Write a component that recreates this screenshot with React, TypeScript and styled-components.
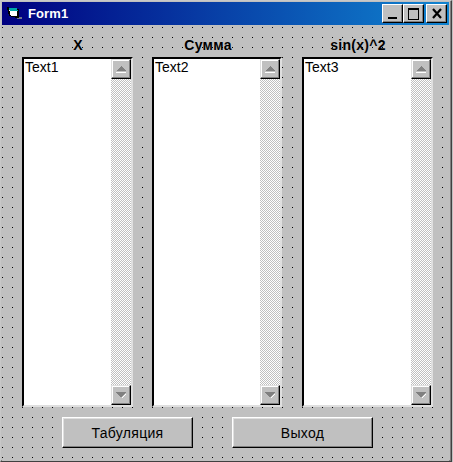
import React from "react";
import styled, { createGlobalStyle } from "styled-components";

const Global = createGlobalStyle`
  html, body { margin: 0; padding: 0; background: #c0c0c0; }
  #root { width: 453px; height: 462px; }
`;

const Win = styled.div`
  box-sizing: border-box;
  width: 452px;
  height: 462px;
  padding: 1px 2px 0 1px;
  display: flex;
  flex-direction: column;
  background: #c0c0c0;
  border-style: solid;
  border-width: 1px;
  border-color: #c8c8c8 #404040 #404040 #c8c8c8;
  box-shadow: inset -1px -1px 0 #808080;
  font-family: "Liberation Sans", Arial, sans-serif;
`;

const TitleBar = styled.div`
  flex: none;
  height: 23px;
  padding: 0 2px 0 5px;
  display: flex;
  align-items: center;
  background: linear-gradient(to right, #000080, #1084d0);
`;

const Caption = styled.span`
  margin-left: 5px;
  flex: 1;
  color: #fff;
  font-size: 13px;
  font-weight: 700;
  letter-spacing: 0.1px;
`;

const CtlButton = styled.div<{ $gap?: number }>`
  box-sizing: border-box;
  width: 21px;
  height: 19px;
  margin-left: ${(p) => p.$gap ?? 0}px;
  display: flex;
  align-items: center;
  justify-content: center;
  background: #c0c0c0;
  border-style: solid;
  border-width: 1px;
  border-color: #fff #000 #000 #fff;
  box-shadow: inset -1px -1px 0 #808080;
`;

const Form = styled.div`
  flex: 1;
  padding: 13px 0 0 20px;
  background-color: #c0c0c0;
  background-image: conic-gradient(at 1px 1px, transparent 270deg, #000 0);
  background-size: 10px 10px;
  background-position: 0 2px;
`;

const Columns = styled.div`
  display: flex;
`;

const Column = styled.div<{ $width: number; $gap: number }>`
  display: flex;
  flex-direction: column;
  width: ${(p) => p.$width}px;
  margin-right: ${(p) => p.$gap}px;
`;

const Label = styled.div`
  width: 112px;
  height: 19px;
  text-align: center;
  font-size: 14px;
  font-weight: 700;
  letter-spacing: 0.3px;
  line-height: 14px;
  color: #000;
`;

const TextBox = styled.div`
  box-sizing: border-box;
  height: 350px;
  display: flex;
  background: #fff;
  border-style: solid;
  border-width: 2px;
  border-color: #000 #dfdfdf #dfdfdf #000;
`;

const BoxText = styled.div`
  flex: 1;
  padding-left: 1px;
  font-size: 14px;
  line-height: 16px;
  color: #000;
`;

const ScrollBar = styled.div`
  flex: none;
  width: 20px;
  display: flex;
  flex-direction: column;
  justify-content: space-between;
  background-color: #fff;
  background-image: conic-gradient(#c0c0c0 25%, #fff 0 50%, #c0c0c0 0 75%, #fff 0);
  background-size: 2px 2px;
`;

const Arrow = styled.div`
  box-sizing: border-box;
  width: 20px;
  height: 20px;
  display: flex;
  align-items: center;
  justify-content: center;
  background: #c0c0c0;
  border-style: solid;
  border-width: 1px;
  border-color: #dfdfdf #000 #000 #dfdfdf;
  box-shadow: inset -1px -1px 0 #808080, inset 1px 1px 0 #fff;
`;

const Actions = styled.div`
  display: flex;
  margin-top: 10px;
  padding-left: 40px;
  gap: 39px;
`;

const PushButton = styled.div<{ $width: number }>`
  box-sizing: border-box;
  width: ${(p) => p.$width}px;
  height: 31px;
  display: flex;
  align-items: center;
  justify-content: center;
  background: #c0c0c0;
  border-style: solid;
  border-width: 1px;
  border-color: #fff #000 #000 #fff;
  box-shadow: inset -1px -1px 0 #808080, inset 1px 1px 0 #dfdfdf;
  font-size: 14px;
  letter-spacing: 0.3px;
  color: #000;
`;

const FormIcon = () => (
  <svg width="16" height="13" viewBox="0 0 16 13" shapeRendering="crispEdges">
    <path d="M0 0h2v1h8v1h2v8h1v1H8v-1H4V9H2V7H1V3H0z" fill="#000" />
    <path d="M2 2h8v7H4V8H3V4H2z" fill="#fff" />
    <path d="M2 1h8v2h1v1H3V3H2z" fill="#00a8a8" />
    <path d="M12 10h3v2h-5v-1h2z" fill="#707888" />
  </svg>
);

const ArrowGlyph = ({ down }: { down?: boolean }) => (
  <svg width="12" height="8" viewBox="0 0 12 8" shapeRendering="crispEdges">
    {down ? (
      <>
        <path d="M1 1h10L6 7z" fill="#808080" />
        <path d="M6 7l5-5v1L7 7z" fill="#fff" />
      </>
    ) : (
      <>
        <path d="M6 1l5 5H1z" fill="#808080" />
        <path d="M1 7h10" stroke="#fff" />
      </>
    )}
  </svg>
);

const boxes = [
  { label: "X", text: "Text1", width: 111, gap: 19 },
  { label: "Сумма", text: "Text2", width: 130, gap: 20 },
  { label: "sin(x)^2", text: "Text3", width: 131, gap: 0 },
];

export default function App() {
  return (
    <>
      <Global />
      <Win>
        <TitleBar>
          <FormIcon />
          <Caption>Form1</Caption>
          <CtlButton>
            <svg width="12" height="12" viewBox="0 0 12 12" shapeRendering="crispEdges">
              <path d="M1 9h9v2H1z" fill="#000" />
            </svg>
          </CtlButton>
          <CtlButton>
            <svg width="13" height="12" viewBox="0 0 13 12" shapeRendering="crispEdges">
              <path d="M1 0h11v12H1zM2 2v9h9V2z" fill="#000" fillRule="evenodd" />
            </svg>
          </CtlButton>
          <CtlButton $gap={2}>
            <svg width="12" height="11" viewBox="0 0 12 11">
              <path d="M2 1l8 9M10 1l-8 9" stroke="#000" strokeWidth="2.2" fill="none" />
            </svg>
          </CtlButton>
        </TitleBar>
        <Form>
          <Columns>
            {boxes.map((b) => (
              <Column key={b.text} $width={b.width} $gap={b.gap}>
                <Label>{b.label}</Label>
                <TextBox>
                  <BoxText>{b.text}</BoxText>
                  <ScrollBar>
                    <Arrow>
                      <ArrowGlyph />
                    </Arrow>
                    <Arrow>
                      <ArrowGlyph down />
                    </Arrow>
                  </ScrollBar>
                </TextBox>
              </Column>
            ))}
          </Columns>
          <Actions>
            <PushButton $width={131}>Табуляция</PushButton>
            <PushButton $width={141}>Выход</PushButton>
          </Actions>
        </Form>
      </Win>
    </>
  );
}
